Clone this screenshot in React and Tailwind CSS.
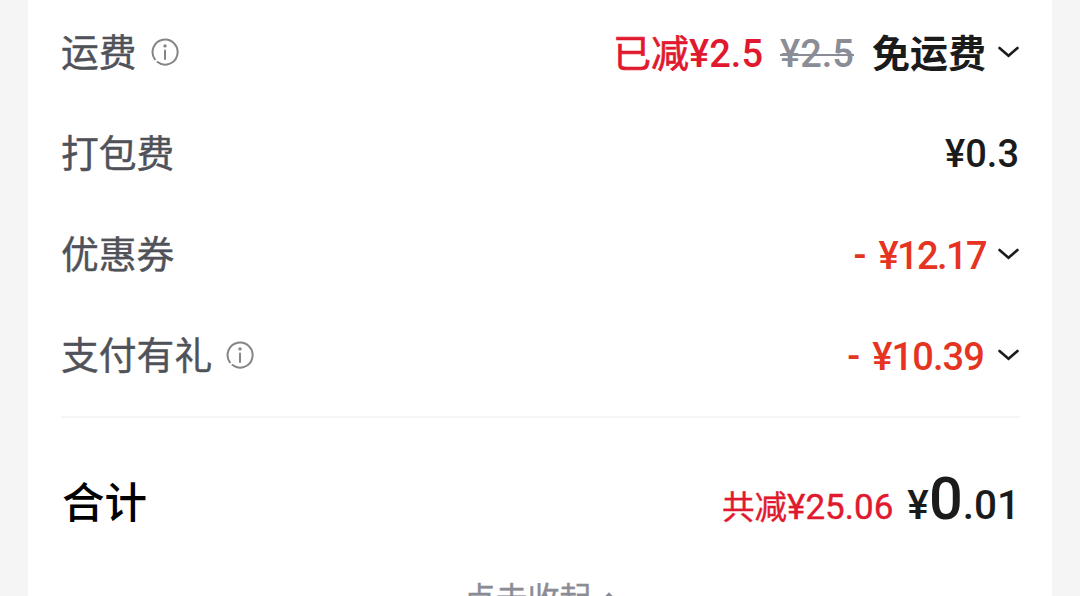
function InfoIcon() {
  return (
    <svg className="mb-px ml-3.5 h-7 w-7 shrink-0" viewBox="0 0 28 28" fill="none">
      <path
        d="M3.9 21.3A12.5 12.5 0 1 1 6.5 24"
        stroke="#858585"
        strokeWidth="2"
        strokeLinecap="round"
      />
      <circle cx="14" cy="7.9" r="1.7" fill="#858585" />
      <path d="M14 12.5V21" stroke="#858585" strokeWidth="2" strokeLinecap="round" />
    </svg>
  );
}

function Chevron() {
  return (
    <svg className="mr-px mb-0.5 ml-3 h-3 w-[21px] shrink-0" viewBox="0 0 21 12" fill="none">
      <path
        d="M1.5 2L10.5 9.8L19.5 2"
        stroke="#1b1b1b"
        strokeWidth="2.6"
        strokeLinecap="round"
      />
    </svg>
  );
}

function Row({ label, info, children }) {
  return (
    <div className="flex h-[101px] items-center justify-between">
      <div className="flex items-center text-[37.8px] text-[#505259]">
        <span className="pt-0.5 [-webkit-text-stroke:0.4px]">{label}</span>
        {info && <InfoIcon />}
      </div>
      <div className="flex items-center text-[38px] font-medium">{children}</div>
    </div>
  );
}

export default function App() {
  return (
    <div className="h-[596px] overflow-hidden bg-[#f5f5f5] px-7 font-[Roboto,'Noto_Sans_CJK_SC',sans-serif] leading-none whitespace-nowrap">
      <div className="h-full bg-white pt-0.5 pl-[33px]">
        <div className="w-[959px]">
          <Row label="运费" info>
            <span className="pt-0.5 font-normal text-[#e1192f] [-webkit-text-stroke:0.7px]">已减</span>
            <span className="pt-0.5 text-[#e1192f]">¥2.5</span>
            <span className="ml-[17px] pt-0.5 text-[#8b8d96] line-through decoration-2">¥2.5</span>
            <span className="ml-[18px] pt-0.5 font-bold text-[#1b1b1b]">免运费</span>
            <Chevron />
          </Row>

          <Row label="打包费">
            <span className="mr-px text-[#1b1b1b]">¥0.3</span>
          </Row>

          <Row label="优惠券">
            <span className="text-[#e63423]">-</span>
            <span className="ml-3 pt-0.5 tracking-[-1.6px] text-[#e63423]">¥12.17</span>
            <Chevron />
          </Row>

          <Row label="支付有礼" info>
            <span className="text-[#e63423]">-</span>
            <span className="mr-0.5 ml-3 pt-0.5 tracking-[-0.9px] text-[#e63423]">¥10.39</span>
            <Chevron />
          </Row>
        </div>

        <div className="mt-2.5 w-[959px] border-t-2 border-[#f5f5f5]" />

        {/* Gesamtsumme */}
        <div className="mt-[49px] flex h-[72px] w-[959px] items-start justify-between">
          <span className="mt-4 pl-px text-[42.5px] font-medium text-black">合计</span>
          <div className="mt-[3px] flex items-baseline">
            <span className="text-[32.5px] text-[#e1192f] [-webkit-text-stroke:0.4px]">共减</span>
            <span className="text-[35px] text-[#e1192f] [-webkit-text-stroke:0.4px]">¥25.06</span>
            <span className="ml-3.5 text-[40.5px] font-medium text-[#1b1b1b]">¥</span>
            <span className="text-[59.5px] font-medium text-[#1b1b1b]">0</span>
            <span className="text-[40.5px] font-medium text-[#1b1b1b]">.01</span>
          </div>
        </div>

        <div className="mt-11 flex w-[959px] items-center justify-center text-[32px] text-[#8b8d96]">
          <span className="[-webkit-text-stroke:0.4px]">点击收起</span>
          <svg className="mb-1 ml-2 h-3 w-[18px]" viewBox="0 0 18 12" fill="none">
            <path d="M2 10L9 3L16 10" stroke="#8b8d96" strokeWidth="2.4" strokeLinecap="round" />
          </svg>
        </div>
      </div>
    </div>
  );
}
